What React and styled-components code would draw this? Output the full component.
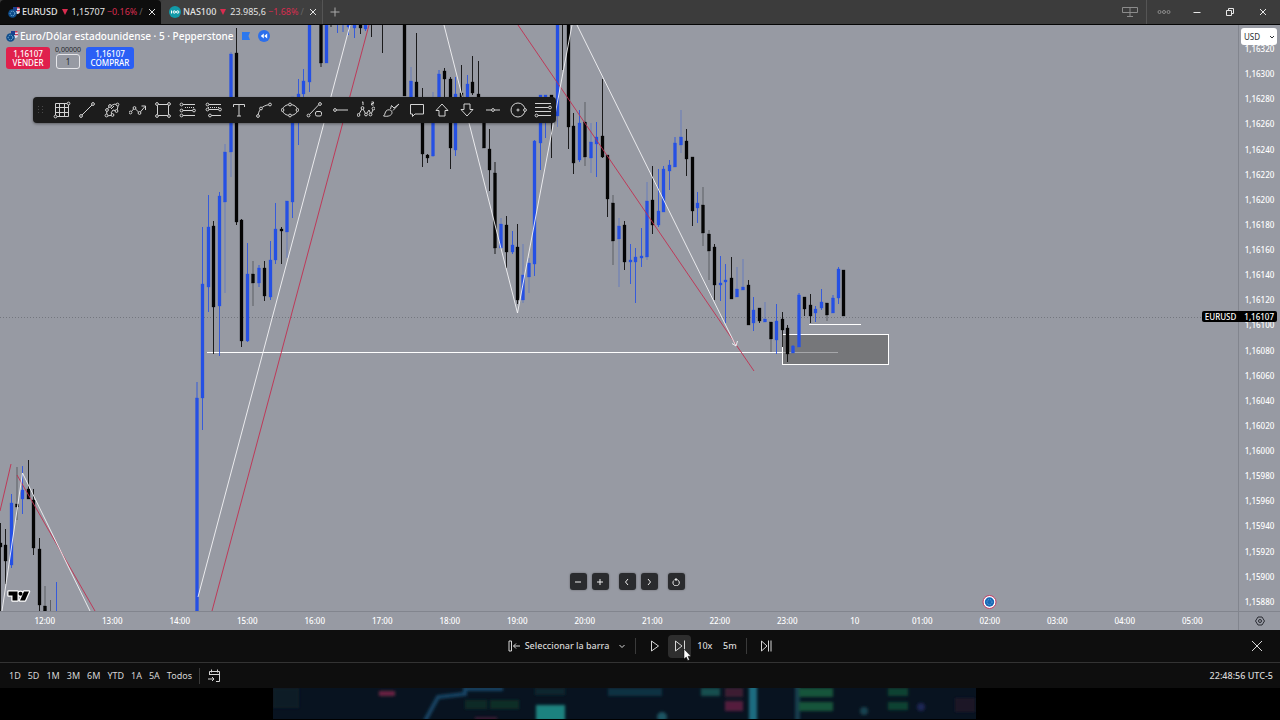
import styled, { createGlobalStyle, css } from "styled-components";

const GlobalStyle = createGlobalStyle`
  * {
    box-sizing: border-box;
  }
  body {
    margin: 0;
    background: #000;
    color: #d6d6d6;
    font-family: "Noto Sans", "Open Sans", sans-serif;
    font-size: 9px;
    line-height: 12px;
  }
  button, input, select {
    margin: 0;
    padding: 0;
    border: 0;
    background: none;
    color: inherit;
    font: inherit;
  }
  svg {
    display: block;
    flex: none;
  }
`;

const BLUE = "#2550e4";
const BLACK = "#050505";

// x, high, body top, body bottom, low, direction, faint wick
const candles = [
  [0.5, 523, 543, 547, 611, "d"],
  [5.5, 529, 545, 561, 584, "d"],
  [11.5, 494, 503, 565, 568, "u"],
  [17, 467, 504, 507, 520, "d", 1],
  [22.5, 466, 490, 499, 514, "u"],
  [28.5, 460, 489, 499, 499, "d"],
  [33.5, 489, 500, 548, 555, "d"],
  [39.5, 538, 549, 605, 611, "d"],
  [45, 586, 606, 611, 611, "d", 1],
  [50.5, 600, 611, 611, 611, "d", 1],
  [56.5, 582, 611, 611, 611, "u"],
  [197, 382, 398, 611, 611, "u"],
  [202.5, 227, 284, 398, 430, "u"],
  [208.5, 195, 227, 287, 312, "u"],
  [213.5, 221, 226, 307, 354, "d"],
  [219.5, 192, 196, 306, 356, "u"],
  [225, 144, 152, 202, 293, "u", 1],
  [231, 52, 54, 152, 177, "u", 1],
  [236.5, 28, 53, 222, 225, "d"],
  [241.5, 219, 220, 341, 347, "d"],
  [247.5, 243, 274, 341, 342, "u"],
  [253, 261, 274, 283, 306, "d", 1],
  [259, 265, 268, 283, 287, "u"],
  [264.5, 261, 268, 296, 301, "d"],
  [270.5, 241, 260, 297, 300, "u"],
  [275.5, 203, 229, 260, 264, "u"],
  [281.5, 227, 229, 231, 264, "d"],
  [287, 201, 201, 232, 258, "u", 1],
  [292.5, 97, 97, 202, 218, "u"],
  [298.5, 79, 94, 112, 145, "u"],
  [303.5, 69, 81, 94, 97, "u"],
  [309.5, 20, 20, 82, 92, "u"],
  [321, 20, 20, 63, 67, "d"],
  [326.5, 20, 20, 63, 63, "u"],
  [331, 20, 20, 20, 27, "d"],
  [337.5, 20, 20, 20, 33, "u"],
  [343, 20, 20, 20, 32, "u"],
  [348.5, 20, 20, 27, 35, "u"],
  [354.5, 20, 20, 28, 38, "u"],
  [360.5, 20, 20, 28, 34, "d"],
  [365.5, 20, 20, 29, 31, "u"],
  [371.5, 20, 20, 20, 37, "d"],
  [382.5, 20, 20, 20, 53, "d"],
  [404.5, 20, 20, 96, 96, "d"],
  [411, 67, 81, 100, 100, "u", 1],
  [416.5, 33, 82, 100, 100, "d"],
  [422.5, 88, 105, 154, 167, "d"],
  [427.5, 154, 155, 158, 163, "d"],
  [433, 92, 100, 156, 157, "u", 1],
  [439, 70, 74, 100, 100, "u"],
  [444.5, 68, 71, 79, 98, "d"],
  [450.5, 77, 79, 148, 169, "d"],
  [455.5, 77, 94, 150, 156, "u"],
  [461.5, 65, 93, 112, 112, "d"],
  [467.5, 75, 84, 98, 98, "u"],
  [472.5, 56, 82, 93, 95, "d"],
  [478.5, 61, 94, 112, 112, "d"],
  [484, 100, 100, 148, 148, "d"],
  [489.5, 129, 149, 170, 191, "d"],
  [495, 162, 173, 248, 254, "d"],
  [501, 218, 224, 248, 249, "u", 1],
  [506.5, 216, 225, 252, 268, "d"],
  [512.5, 231, 245, 252, 254, "u"],
  [517.5, 224, 247, 300, 304, "d"],
  [523, 244, 275, 300, 303, "u", 1],
  [529, 258, 263, 277, 293, "u", 1],
  [534.5, 140, 141, 264, 276, "u"],
  [540.5, 95, 95, 143, 170, "u"],
  [545.5, 95, 95, 115, 138, "u"],
  [551.5, 95, 95, 115, 158, "d"],
  [557.5, 20, 20, 116, 127, "u", 1],
  [562.5, 20, 20, 20, 70, "d"],
  [568.5, 20, 20, 127, 149, "d"],
  [573.5, 113, 126, 163, 174, "d"],
  [579.5, 110, 123, 160, 162, "u"],
  [585, 102, 122, 157, 166, "d", 1],
  [591, 123, 142, 158, 173, "u", 1],
  [596.5, 122, 137, 144, 177, "u"],
  [602.5, 79, 136, 157, 158, "d"],
  [607.5, 155, 155, 199, 217, "d"],
  [613, 195, 203, 241, 265, "d", 1],
  [619, 218, 226, 239, 287, "u", 1],
  [624.5, 221, 225, 262, 270, "d"],
  [630.5, 244, 260, 262, 284, "u"],
  [635.5, 248, 257, 262, 303, "u"],
  [641.5, 228, 256, 258, 267, "u"],
  [647, 182, 201, 257, 260, "u", 1],
  [652.5, 166, 200, 225, 234, "d"],
  [658.5, 169, 211, 225, 227, "u"],
  [663.5, 166, 169, 212, 212, "u"],
  [669.5, 160, 165, 171, 190, "u"],
  [675, 137, 143, 167, 167, "u"],
  [681, 110, 137, 145, 153, "u", 1],
  [686.5, 129, 141, 159, 176, "d"],
  [692.5, 157, 157, 211, 226, "d"],
  [697.5, 192, 203, 208, 223, "u"],
  [703, 187, 205, 233, 246, "d", 1],
  [709, 230, 234, 251, 280, "d", 1],
  [714.5, 244, 247, 285, 300, "d"],
  [720.5, 256, 283, 285, 301, "u"],
  [725.5, 264, 280, 282, 323, "u"],
  [731.5, 257, 278, 299, 299, "d"],
  [737, 267, 289, 297, 297, "u", 1],
  [743, 259, 287, 290, 290, "u", 1],
  [748.5, 280, 285, 325, 325, "d"],
  [753.5, 297, 310, 323, 331, "u"],
  [759.5, 308, 308, 321, 323, "d"],
  [765, 302, 319, 322, 322, "u", 1],
  [771, 322, 322, 339, 352, "d", 1],
  [776.5, 304, 321, 340, 354, "u"],
  [782.5, 312, 319, 330, 347, "d"],
  [787.5, 325, 328, 354, 362, "d"],
  [793, 345, 346, 353, 353, "u"],
  [799, 293, 295, 347, 347, "u"],
  [804.5, 297, 297, 309, 316, "d"],
  [810.5, 294, 305, 316, 323, "d"],
  [815.5, 306, 309, 313, 322, "u"],
  [821.5, 289, 302, 308, 310, "u"],
  [827, 303, 303, 315, 321, "d", 1],
  [833, 295, 298, 313, 313, "u"],
  [838.5, 267, 269, 298, 304, "u"],
  [843.5, 270, 270, 316, 316, "d"],
];

const prices = Array.from({ length: 23 }, (_, i) => `1,${16320 - i * 20}`);

const hours = [
  "12:00", "13:00", "14:00", "15:00", "16:00", "17:00", "18:00", "19:00", "20:00",
  "21:00", "22:00", "23:00", "10", "01:00", "02:00", "03:00", "04:00", "05:00",
];

const ranges = ["1D", "5D", "1M", "3M", "6M", "YTD", "1A", "5A", "Todos"];

const Dot = ({ x, y }) => <circle cx={x} cy={y} r="1.4" fill="#1c1c1c" />;

const tools = [
  {
    name: "Cuadrícula",
    art: (
      <>
        <path d="M2.500 2.500h13v13h-13zM6.500 2.500v13M11.500 2.500v13M2.500 6.500h13M2.500 11.500h13" />
        <Dot x={15.5} y={2.5} />
        <Dot x={2.5} y={15.5} />
      </>
    ),
  },
  { name: "Línea de tendencia", art: <><path d="M3.500 14.500l11-11" /><Dot x={3} y={15} /><Dot x={15} y={3} /></> },
  {
    name: "Ruta",
    art: (
      <>
        <path d="M4 15l-.500-6L7 5l5-2 3 2-1 5-4-1-2 3 2 2-6 1zM8 8l3-3" />
        <Dot x={3.5} y={14.5} />
        <Dot x={4} y={9} />
        <Dot x={7} y={5} />
        <Dot x={14.5} y={3.5} />
        <Dot x={13.5} y={10} />
        <Dot x={9.5} y={14} />
      </>
    ),
  },
  { name: "Polilínea", art: <><path d="M1.500 11.500l4-4.500 5 5 5.500-6.500M12.500 5H16.500v4" /><Dot x={1.5} y={11.5} /><Dot x={5.5} y={7} /><Dot x={10.5} y={12} /></> },
  {
    name: "Rectángulo",
    art: (
      <>
        <path d="M3.500 3.500h11v11h-11z" />
        <Dot x={3} y={3} />
        <Dot x={15} y={3} />
        <Dot x={3} y={15} />
        <Dot x={15} y={15} />
      </>
    ),
  },
  {
    name: "Posición larga",
    art: (
      <>
        <path d="M3 3.500h13M3 9.500h12M3 14.500h13" />
        <path d="M6 6.500h9" strokeDasharray="1 1" />
        <Dot x={2.5} y={3.5} />
        <Dot x={2.5} y={9.5} />
        <Dot x={15} y={9.5} />
        <Dot x={2.5} y={14.5} />
      </>
    ),
  },
  {
    name: "Posición corta",
    art: (
      <>
        <path d="M3 3.500h13M3 8.500h12M3 14.500h13" />
        <path d="M3 6.500h12" strokeDasharray="1 1" />
        <Dot x={2.5} y={3.5} />
        <Dot x={2.5} y={8.5} />
        <Dot x={15} y={8.5} />
        <Dot x={5} y={14.5} />
      </>
    ),
  },
  { name: "Texto", art: <path d="M3.500 6V3.500h11V6M9 3.500v11.500M7 15h4" /> },
  { name: "Curva", art: <><path d="M3 15c.500-5 3-10.500 12-11.500" /><Dot x={3} y={15} /><Dot x={6} y={7.5} /><Dot x={15} y={3.5} /></> },
  { name: "Elipse", art: <><ellipse cx="9" cy="9" rx="7.500" ry="5.500" /><Dot x={1.5} y={9} /><Dot x={16.5} y={9} /><Dot x={9} y={3.5} /><Dot x={9} y={14.5} /></> },
  { name: "Borrar dibujo", art: <><path d="M3 14L13 3.500" /><Dot x={2.5} y={14.5} /><Dot x={14} y={3} /><rect x="9.500" y="10.500" width="6" height="4.500" rx="1.500" /></> },
  { name: "Rayo horizontal", art: <><path d="M3 9h13" /><Dot x={3} y={9} /></> },
  {
    name: "Onda de Elliott",
    art: (
      <>
        <path d="M1.500 14l4-7 3.500 6.500L12 9l2 4.500 2.500-6" />
        <path d="M5 1.500L6 .800V4M14.500 1h2v1.500h-2V4h2" />
        <Dot x={1.5} y={14} />
        <Dot x={5.5} y={7} />
        <Dot x={9} y={13.5} />
        <Dot x={13.5} y={13.5} />
        <Dot x={16.5} y={7.5} />
      </>
    ),
  },
  { name: "Pincel", art: <path d="M1.500 15c2-1 1-5 4-6 2.500-.800 4.500.500 4.500 2.500 0 3-4 4.500-8.500 3.500zM8.500 8l1-3.500 2.500 2.500 5-4-6 6.500" /> },
  { name: "Comentario", art: <path d="M2.500 3.500h13v9.500H7l-2.500 2.500V13h-2z" /> },
  { name: "Flecha arriba", art: <path d="M9 3l6 6.500h-3V15H6V9.500H3z" /> },
  { name: "Flecha abajo", art: <path d="M9 15l6-6.500h-3V3H6v5.500H3z" /> },
  { name: "Línea horizontal", art: <><path d="M2 9h14" /><Dot x={9} y={9} /></> },
  { name: "Círculo", art: <><circle cx="9" cy="9" r="7" /><circle cx="9" cy="9" r="1" /><Dot x={16} y={9} /></> },
  { name: "Retroceso de Fibonacci", art: <><path d="M1 2.500h16M1 6.500h14M1 10.500h16M4 14.500h13" /><Dot x={16} y={6.5} /><Dot x={2.5} y={14.5} /></> },
];

const Icon = ({ size = 18, box = 18, children, ...rest }) => (
  <svg
    width={size}
    height={size}
    viewBox={`0 0 ${box} ${box}`}
    fill="none"
    stroke="currentColor"
    strokeLinejoin="round"
    aria-hidden="true"
    {...rest}
  >
    {children}
  </svg>
);

const CloseIcon = ({ size = 8 }) => (
  <Icon size={size} box={size}>
    <path d={`M1 1l${size - 2} ${size - 2}M${size - 1} 1L1 ${size - 1}`} />
  </Icon>
);

const PairIcon = () => (
  <Icon size={12} box={12} stroke="none">
    <rect x="5" y="1" width="7" height="7" rx="3" fill="#dfe3ee" />
    <path d="M9 1h2.500v1.500H9zM9 4h3v1.200H9z" fill="#cf3550" />
    <path d="M5 1h4v4H5z" fill="#1e3f8f" />
    <circle cx="4.500" cy="7.500" r="4.300" fill="#0f4d8c" />
    <circle cx="4.500" cy="7.500" r="2.300" fill="none" stroke="#8fc4e6" strokeDasharray="1 1" />
  </Icon>
);

const IndexIcon = () => (
  <Icon size={12} box={12} stroke="none">
    <circle cx="6" cy="6" r="6" fill="#129aa8" />
    <path d="M2.500 4.500v3" stroke="#fff" />
    <circle cx="5.300" cy="6" r="1.200" stroke="#fff" />
    <circle cx="8.700" cy="6" r="1.200" stroke="#fff" />
  </Icon>
);

const Chart = () => (
  <ChartSvg aria-label="Gráfico de velas EURUSD">
    <g transform="translate(0 -25)">
      <line x1="0" y1="317.500" x2="100%" y2="317.500" stroke="#74777f" strokeDasharray="1 2" />
      <rect x="782.500" y="334.500" width="106" height="30" fill="#76777a" stroke="#fff" />
      <path d="M782 352.500h56" stroke="#a6a7aa" />
      <path d="M207 352.500h576M809 324.500h52" stroke="#fff" />
      {candles.map(([x, high, top, bottom, low, dir, soft]) => {
        const color = dir === "u" ? BLUE : BLACK;
        return (
          <g key={x} fill={color}>
            <rect x={x - 0.5} y={high} width="1" height={low - high} opacity={soft ? 0.4 : 0.85} />
            {bottom > top && <rect x={x - 1.5} y={top} width="3" height={bottom - top} stroke={color} strokeWidth="0.300" />}
          </g>
        );
      })}
      <g fill="none" stroke="#c22f50" strokeWidth="0.900">
        <path d="M0 511L11 464M17 475L95 611M212 611L369 25M518 25L754 371" />
      </g>
      <g fill="none" stroke="#f4f4f6" strokeWidth="0.900">
        <path d="M2 611L22.500 473L90 611M198 597L350 25M444 25L517.500 313L572 25M577 25L736 346M732 343.500l4 2.500 1.500-5" />
      </g>
      <g fill="#000">
        <g stroke="#fff" strokeWidth="2.500" strokeLinejoin="round">
          <path d="M8.500 591.500h9v9h-5v-5h-4zM24 591.500h5l-4 9h-5z" />
          <circle cx="20.500" cy="593.700" r="2" />
        </g>
        <path d="M8.500 591.500h9v9h-5v-5h-4zM24 591.500h5l-4 9h-5z" />
        <circle cx="20.500" cy="593.700" r="2" />
      </g>
      <circle cx="989.500" cy="602" r="6.500" fill="#fff" stroke="#c23a63" />
      <circle cx="989.500" cy="602" r="4.700" fill="#1769b5" />
      <circle cx="989.500" cy="602" r="2.500" fill="none" stroke="#6ba5db" strokeDasharray="1 1" />
    </g>
  </ChartSvg>
);

const Desktop = () => (
  <Wallpaper aria-hidden="true">
    <svg width="100%" height="32">
      <defs>
        <filter id="soft" x="-20%" y="-50%" width="140%" height="200%">
          <feGaussianBlur stdDeviation="1.500" />
        </filter>
        <clipPath id="frame">
          <rect x="273" y="0" width="703" height="31" />
        </clipPath>
      </defs>
      <g clipPath="url(#frame)">
        <rect x="273" width="703" height="31" fill="#081320" />
        <g filter="url(#soft)">
          <rect x="273" y="0" width="26" height="20" fill="#0a1c25" />
          <rect x="379" y="3" width="16" height="5" fill="#6a2443" />
          <path d="M425 33l13-24 27-3V1h38" fill="none" stroke="#174565" strokeWidth="4" />
          <rect x="465" y="12" width="22" height="9" fill="#0b2926" />
          <rect x="490" y="12" width="29" height="9" fill="#0b2f28" />
          <rect x="475" y="29" width="22" height="4" fill="#3a1a30" />
          <rect x="535" y="0" width="30" height="7" fill="#0e252f" />
          <rect x="536" y="17" width="29" height="16" fill="#1a827f" />
          <rect x="608" y="0" width="54" height="8" fill="#103042" />
          <rect x="701" y="0" width="19" height="8" fill="#17504f" />
          <rect x="725" y="0" width="18" height="9" fill="#3c1a32" />
          <rect x="725" y="13" width="18" height="10" fill="#551f3e" />
          <rect x="749" y="-4" width="8" height="40" fill="#1f6c80" />
          <rect x="795" y="-4" width="5" height="40" fill="#123c4d" />
          <rect x="799" y="0" width="34" height="9" fill="#14543b" />
          <rect x="799" y="14" width="34" height="9" fill="#14543b" />
          <rect x="888" y="0" width="20" height="8" fill="#0f4232" />
          <rect x="888" y="14" width="20" height="8" fill="#0f4232" />
          <circle cx="864" cy="23" r="4" fill="#14434f" />
          <circle cx="921" cy="19" r="4" fill="#1a2555" />
          <circle cx="662" cy="29" r="5" fill="#1b5462" />
          <rect x="955" y="10" width="20" height="14" fill="#1d1226" />
        </g>
      </g>
    </svg>
  </Wallpaper>
);

const App = () => {
  return (
    <Page>
      <GlobalStyle />
      <TabBar>
        <Tab $active>
          <PairIcon />
          <TabName>EURUSD</TabName>
          <Down />
          <span>1,15707</span>
          <Change>−0.16%</Change>
          <Fade>/</Fade>
          <TabClose aria-label="Cerrar EURUSD"><CloseIcon /></TabClose>
        </Tab>
        <Tab>
          <IndexIcon />
          <TabName>NAS100</TabName>
          <Down />
          <span>23.985,6</span>
          <Change>−1.68%</Change>
          <Fade>/</Fade>
          <TabClose aria-label="Cerrar NAS100"><CloseIcon /></TabClose>
        </Tab>
        <NewTab aria-label="Nueva pestaña">
          <Icon size={10} box={10}><path d="M5 .500v9M.500 5h9" /></Icon>
        </NewTab>
        <WindowButtons>
          <WindowButton aria-label="Diseño" $dim $wide>
            <Icon size={16} box={16}><path d="M.500 3.500h15v5H.500zM8 3.500v9M5 12.500h6" /></Icon>
          </WindowButton>
          <WindowButton aria-label="Más" $dim>
            <Icon size={14} box={14}>
              <circle cx="2.500" cy="7" r="1.500" />
              <circle cx="7" cy="7" r="1.500" />
              <circle cx="11.500" cy="7" r="1.500" />
            </Icon>
          </WindowButton>
          <WindowButton aria-label="Minimizar"><Icon size={8} box={8}><path d="M.500 4.500h7" /></Icon></WindowButton>
          <WindowButton aria-label="Restaurar">
            <Icon size={8} box={8}><path d="M.500 2.500h5v5h-5zM2.500 2.500v-2h5v5h-2" /></Icon>
          </WindowButton>
          <WindowButton aria-label="Cerrar"><CloseIcon /></WindowButton>
        </WindowButtons>
      </TabBar>

      <ChartArea>
        <Plot>
          <Chart />
          <Legend>
            <Title>
              <PairIcon />
              <h1>Euro/Dólar estadounidense · 5 · Pepperstone</h1>
              <Icon size={8} box={8} stroke="none"><path d="M0 0h8L6.500 4 8 8H0z" fill="#2c78ee" /></Icon>
              <Icon size={12} box={12} stroke="none">
                <circle cx="6" cy="6" r="6" fill="#2c6fec" />
                <path d="M5.800 3.500v5L2.800 6zM9.200 3.500v5L6.200 6z" fill="#fff" />
              </Icon>
            </Title>
            <Orders>
              <OrderButton $color="#e0204c" $width={44}>1,16107<br />VENDER</OrderButton>
              <Lot>
                <span>0,00000</span>
                <input defaultValue="1" />
              </Lot>
              <OrderButton $color="#2a5ff5" $width={48}>1,16107<br />COMPRAR</OrderButton>
            </Orders>
          </Legend>
          <Toolbar role="toolbar" aria-label="Dibujos favoritos">
            <Icon size={8} box={8} stroke="none" fill="#4a4a4a">
              <path d="M1 0h1v1H1zM5 0h1v1H5zM1 3h1v1H1zM5 3h1v1H5zM1 6h1v1H1zM5 6h1v1H5z" />
            </Icon>
            {tools.map((tool) => (
              <Tool key={tool.name} aria-label={tool.name}>
                <Icon>{tool.art}</Icon>
              </Tool>
            ))}
          </Toolbar>
          <Navigation>
            <NavGroup>
              <NavButton aria-label="Alejar"><Icon size={8} box={8}><path d="M1 4h6" /></Icon></NavButton>
              <NavButton aria-label="Acercar"><Icon size={8} box={8}><path d="M1 4h6M4 1v6" /></Icon></NavButton>
            </NavGroup>
            <NavGroup>
              <NavButton aria-label="Anterior"><Icon size={8} box={8}><path d="M5 1L2.500 4 5 7" /></Icon></NavButton>
              <NavButton aria-label="Siguiente"><Icon size={8} box={8}><path d="M3 1l2.500 3L3 7" /></Icon></NavButton>
            </NavGroup>
            <NavButton aria-label="Restablecer">
              <Icon size={8} box={8}><path d="M1.800 2.500A3.200 3.200 0 1 0 4 1.500h-1M4.500 0L3 1.500 4.500 3" /></Icon>
            </NavButton>
          </Navigation>
        </Plot>
        <PriceAxis>
          {prices.map((price) => <span key={price}>{price}</span>)}
        </PriceAxis>
        <Currency>
          <select aria-label="Moneda" defaultValue="USD">
            <option>USD</option>
          </select>
          <Icon size={4} box={4}><path d="M0 1l2 2 2-2" /></Icon>
        </Currency>
        <LastPrice><span>EURUSD</span><span>1,16107</span></LastPrice>
        <TimeAxis>
          {hours.map((hour) => <span key={hour}>{hour}</span>)}
        </TimeAxis>
        <AxisSettings aria-label="Ajustes del eje">
          <Icon size={10} box={10}><path d="M3 1h4l2.500 4L7 9H3L.500 5z" /><circle cx="5" cy="5" r="1.500" /></Icon>
        </AxisSettings>
      </ChartArea>

      <ReplayBar>
        <ReplayControls>
          <SelectBar>
            <Icon size={12} box={12}><path d="M1 1h2.500v10H1zM12 6H5.500M8 3.500L5.500 6 8 8.500" /></Icon>
            Seleccionar la barra
            <Icon size={6} box={6}><path d="M.500 2L3 4.500 5.500 2" /></Icon>
          </SelectBar>
          <Divider />
          <ReplayButton aria-label="Reproducir">
            <Icon size={12} box={12}><path d="M2.500 1l7 5-7 5z" /></Icon>
          </ReplayButton>
          <ReplayButton aria-label="Avanzar" $active>
            <Icon size={12} box={12}><path d="M1.500 1L8 6l-6.500 5zM10.500 .500v11" /></Icon>
            <Cursor width="9" height="14" viewBox="0 0 9 14" aria-hidden="true">
              <path d="M1 1v10l2.300-2 1.500 3.500 1.700-.800L5 8.300h3z" fill="#fff" stroke="#000" strokeWidth="0.500" />
            </Cursor>
          </ReplayButton>
          <ReplayButton>10x</ReplayButton>
          <ReplayButton>5m</ReplayButton>
          <Divider />
          <ReplayButton aria-label="Ir al tiempo real">
            <Icon size={12} box={12}><path d="M1.500 1L7 6l-5.500 5zM8.500 .500v11M11 .500v11" /></Icon>
          </ReplayButton>
        </ReplayControls>
        <CloseReplay aria-label="Cerrar repetición"><CloseIcon size={12} /></CloseReplay>
      </ReplayBar>

      <Footer>
        {ranges.map((range) => <button key={range}>{range}</button>)}
        <Divider />
        <button aria-label="Ir a la fecha">
          <Icon size={14} box={14}>
            <path d="M2.500 6V2.500h10v10H9M2.500 5.500h10M4.500 .500v3M10.500 .500v3M1 10h6M5 8l2 2-2 2" />
          </Icon>
        </button>
        <Clock>22:48:56 UTC-5</Clock>
      </Footer>
      <Desktop />
    </Page>
  );
};

const Page = styled.div`
  min-height: 100vh;
  display: flex;
  flex-direction: column;
`;

const TabBar = styled.header`
  height: 25px;
  display: flex;
  align-items: stretch;
  background: #3c3c3c;
  border-bottom: 1px solid #050505;
`;

const Tab = styled.div`
  width: 161px;
  display: flex;
  align-items: center;
  gap: 2px;
  padding: 0 5px 0 8px;
  color: #e4e4e4;
  white-space: nowrap;
  background: ${({ $active }) => ($active ? "#0e0e0e" : "#3f3f3f")};
  border-radius: 4px 4px 0 0;
`;

const TabName = styled.span`
  font-weight: 500;
`;

const Down = styled.i`
  margin: 0 2px;
  border: 3px solid transparent;
  border-top: 6px solid #d92c4f;
  border-bottom: 0;
`;

const Change = styled.span`
  color: #d92c4f;
`;

const Fade = styled.span`
  color: #666;
`;

const TabClose = styled.button`
  margin-left: auto;
`;

const NewTab = styled.button`
  padding: 0 7px;
  color: #aaa;
  border-left: 1px solid #555;
`;

const WindowButtons = styled.div`
  margin: 0 1px 0 auto;
  display: flex;
`;

const WindowButton = styled.button`
  width: 33px;
  display: grid;
  place-items: center;
  color: ${({ $dim }) => ($dim ? "#8c8c8c" : "#e8e8e8")};
  ${({ $wide }) =>
    $wide &&
    css`
      border-right: 1px solid #555;
    `}
`;

const ChartArea = styled.main`
  position: relative;
  flex: 1;
  display: grid;
  grid-template-columns: 1fr 42px;
  grid-template-rows: 1fr 19px;
  background: #979aa3;
  color: #fff;
  font-size: 8px;
  font-weight: 500;
`;

const Plot = styled.section`
  position: relative;
  overflow: hidden;
`;

const ChartSvg = styled.svg`
  position: absolute;
  inset: 0;
  width: 100%;
  height: 100%;
`;

const Legend = styled.div`
  position: relative;
  padding: 5px 6px;
`;

const Title = styled.div`
  display: flex;
  align-items: center;
  gap: 8px;
  h1 {
    margin: 0 0 0 -6px;
    font-size: 10px;
    line-height: 12px;
    font-weight: 500;
  }
`;

const Orders = styled.div`
  margin-top: 3px;
  display: flex;
  align-items: flex-end;
  gap: 6px;
`;

const OrderButton = styled.button`
  width: ${({ $width }) => $width}px;
  height: 22px;
  border-radius: 3px;
  line-height: 9px;
  background: ${({ $color }) => $color};
`;

const Lot = styled.label`
  width: 24px;
  display: flex;
  flex-direction: column;
  align-items: center;
  color: #25262a;
  font-size: 7px;
  line-height: 9px;
  font-weight: 400;
  input {
    width: 24px;
    height: 15px;
    border: 1px solid #e6e6ea;
    border-radius: 3px;
    text-align: center;
    font-size: 8px;
  }
`;

const Toolbar = styled.div`
  position: absolute;
  top: 72px;
  left: 33px;
  width: 523px;
  height: 26px;
  padding-left: 4px;
  display: grid;
  grid-template-columns: 12px repeat(20, 1fr);
  align-items: center;
  border-radius: 4px;
  background: #1c1c1c;
  color: #d2d2d2;
  box-shadow: 0 1px 3px rgba(0, 0, 0, 0.4);
`;

const Tool = styled.button`
  display: grid;
  place-items: center;
`;

const Navigation = styled.div`
  position: absolute;
  bottom: 21px;
  left: 0;
  right: 0;
  padding-left: 16px;
  display: flex;
  justify-content: center;
  gap: 10px;
`;

const NavGroup = styled.div`
  display: flex;
  gap: 5px;
`;

const NavButton = styled.button`
  width: 17px;
  height: 17px;
  display: grid;
  place-items: center;
  border-radius: 3px;
  background: #2a2b2e;
  color: #eee;
  box-shadow: 0 0 2px rgba(0, 0, 0, 0.4);
`;

const PriceAxis = styled.aside`
  display: flex;
  flex-direction: column;
  justify-content: space-between;
  align-items: center;
  padding: 18px 0 3px;
  border-left: 1px solid #82858e;
`;

const Currency = styled.div`
  position: absolute;
  top: 3px;
  right: 3px;
  width: 36px;
  height: 17px;
  display: flex;
  align-items: center;
  padding: 0 3px;
  border-radius: 3px;
  background: #fff;
  color: #2c2f33;
  font-weight: 400;
  select {
    flex: 1;
    appearance: none;
  }
`;

const LastPrice = styled.div`
  position: absolute;
  top: 286px;
  right: 3px;
  height: 11px;
  display: flex;
  gap: 8px;
  padding: 0 3px;
  line-height: 11px;
  border-radius: 2px;
  background: #000;
`;

const TimeAxis = styled.div`
  display: grid;
  grid-template-columns: repeat(18, 1fr);
  align-items: center;
  padding: 0 12px 0 11px;
  border-top: 1px solid #82858e;
  text-align: center;
`;

const AxisSettings = styled.button`
  display: grid;
  place-items: center;
  color: #2a2c33;
  border-left: 1px solid #82858e;
  border-top: 1px solid #82858e;
`;

const ReplayBar = styled.div`
  height: 33px;
  display: grid;
  grid-template-columns: 1fr auto 1fr;
  align-items: center;
  background: #0e0e0e;
  border-bottom: 1px solid #333;
`;

const ReplayControls = styled.div`
  grid-column: 2;
  display: flex;
  align-items: center;
`;

const SelectBar = styled.button`
  display: flex;
  align-items: center;
  gap: 5px;
  font-weight: 500;
  svg:last-child {
    margin: 0 10px 0 5px;
  }
`;

const Divider = styled.span`
  width: 1px;
  height: 16px;
  background: #3a3a3a;
`;

const ReplayButton = styled.button`
  position: relative;
  min-width: 23px;
  height: 23px;
  margin: 0 1px;
  display: grid;
  place-items: center;
  border-radius: 4px;
  font-weight: 500;
  background: ${({ $active }) => ($active ? "#2e2e2e" : "none")};
  ${Divider} + & {
    margin-left: 7px;
  }
  & + ${Divider} {
    margin-left: 4px;
  }
  &:last-child {
    margin-right: -5px;
  }
`;

const Cursor = styled.svg`
  position: absolute;
  left: 15px;
  top: 13px;
`;

const CloseReplay = styled.button`
  justify-self: end;
  margin-right: 17px;
`;

const Footer = styled.footer`
  height: 25px;
  display: flex;
  align-items: center;
  gap: 7px;
  padding: 0 7px 0 9px;
  background: #0e0e0e;
`;

const Clock = styled.time`
  margin-left: auto;
  font-weight: 500;
`;

const Wallpaper = styled.div`
  height: 32px;
  background: #000;
`;

export default App;
